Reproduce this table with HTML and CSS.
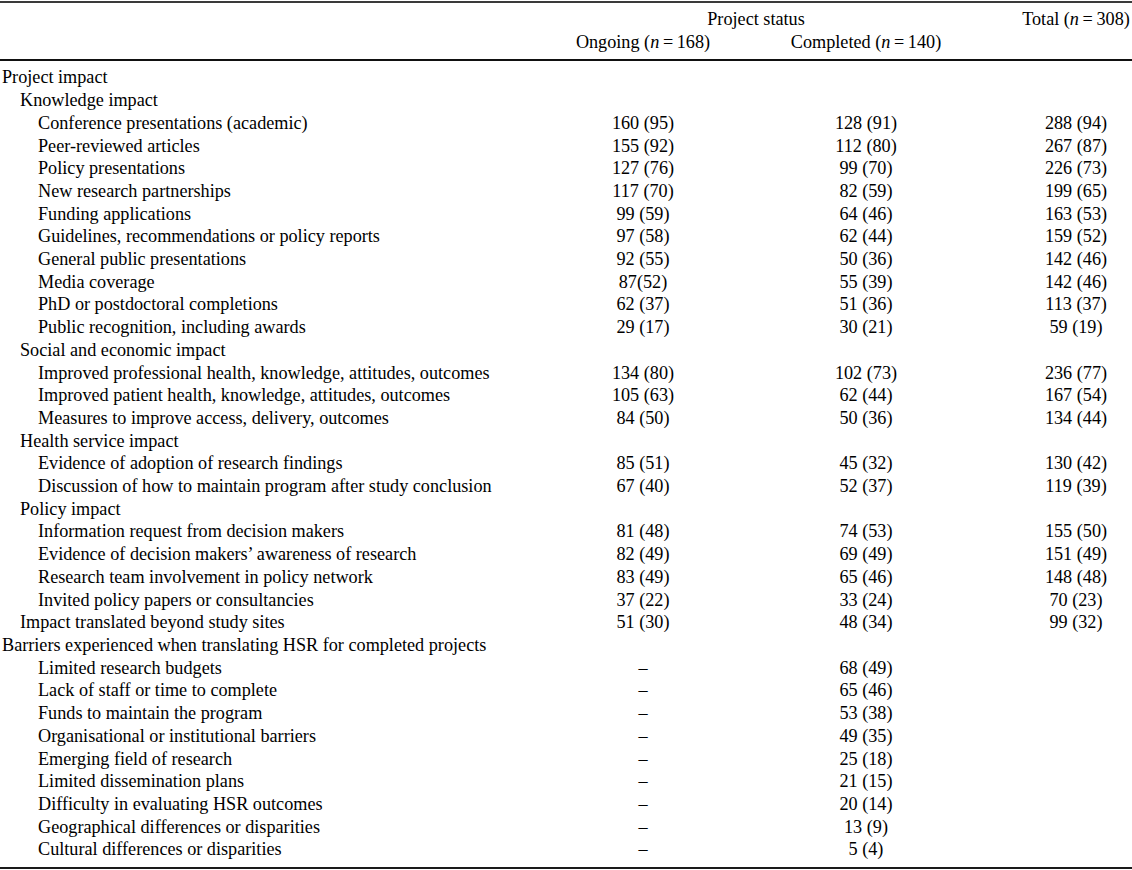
FILE: index.html
```html
<!DOCTYPE html>
<html>
<head>
<meta charset="utf-8">
<link rel="stylesheet" href="styles.css">
</head>
<body>
<table class="tbl">
  <colgroup>
    <col class="c-label">
    <col class="c-ong">
    <col class="c-comp">
    <col class="c-tot">
  </colgroup>
  <thead>
    <tr class="h1">
      <th></th>
      <th colspan="2" class="span">Project status</th>
      <th class="tot">Total (<i>n</i>&#8201;=&#8201;308)</th>
    </tr>
    <tr class="h2">
      <th></th>
      <th>Ongoing (<i>n</i>&#8201;=&#8201;168)</th>
      <th>Completed (<i>n</i>&#8201;=&#8201;140)</th>
      <th></th>
    </tr>
  </thead>
  <tbody>
    <tr class="first"><td class="l0">Project impact</td><td></td><td></td><td></td></tr>
    <tr><td class="l1">Knowledge impact</td><td></td><td></td><td></td></tr>
    <tr><td class="l2">Conference presentations (academic)</td><td>160 (95)</td><td>128 (91)</td><td class="tot">288 (94)</td></tr>
    <tr><td class="l2">Peer-reviewed articles</td><td>155 (92)</td><td>112 (80)</td><td class="tot">267 (87)</td></tr>
    <tr><td class="l2">Policy presentations</td><td>127 (76)</td><td>99 (70)</td><td class="tot">226 (73)</td></tr>
    <tr><td class="l2">New research partnerships</td><td>117 (70)</td><td>82 (59)</td><td class="tot">199 (65)</td></tr>
    <tr><td class="l2">Funding applications</td><td>99 (59)</td><td>64 (46)</td><td class="tot">163 (53)</td></tr>
    <tr><td class="l2">Guidelines, recommendations or policy reports</td><td>97 (58)</td><td>62 (44)</td><td class="tot">159 (52)</td></tr>
    <tr><td class="l2">General public presentations</td><td>92 (55)</td><td>50 (36)</td><td class="tot">142 (46)</td></tr>
    <tr><td class="l2">Media coverage</td><td>87(52)</td><td>55 (39)</td><td class="tot">142 (46)</td></tr>
    <tr><td class="l2">PhD or postdoctoral completions</td><td>62 (37)</td><td>51 (36)</td><td class="tot">113 (37)</td></tr>
    <tr><td class="l2">Public recognition, including awards</td><td>29 (17)</td><td>30 (21)</td><td class="tot">59 (19)</td></tr>
    <tr><td class="l1">Social and economic impact</td><td></td><td></td><td></td></tr>
    <tr><td class="l2">Improved professional health, knowledge, attitudes, outcomes</td><td>134 (80)</td><td>102 (73)</td><td class="tot">236 (77)</td></tr>
    <tr><td class="l2">Improved patient health, knowledge, attitudes, outcomes</td><td>105 (63)</td><td>62 (44)</td><td class="tot">167 (54)</td></tr>
    <tr><td class="l2">Measures to improve access, delivery, outcomes</td><td>84 (50)</td><td>50 (36)</td><td class="tot">134 (44)</td></tr>
    <tr><td class="l1">Health service impact</td><td></td><td></td><td></td></tr>
    <tr><td class="l2">Evidence of adoption of research findings</td><td>85 (51)</td><td>45 (32)</td><td class="tot">130 (42)</td></tr>
    <tr><td class="l2">Discussion of how to maintain program after study conclusion</td><td>67 (40)</td><td>52 (37)</td><td class="tot">119 (39)</td></tr>
    <tr><td class="l1">Policy impact</td><td></td><td></td><td></td></tr>
    <tr><td class="l2">Information request from decision makers</td><td>81 (48)</td><td>74 (53)</td><td class="tot">155 (50)</td></tr>
    <tr><td class="l2">Evidence of decision makers’ awareness of research</td><td>82 (49)</td><td>69 (49)</td><td class="tot">151 (49)</td></tr>
    <tr><td class="l2">Research team involvement in policy network</td><td>83 (49)</td><td>65 (46)</td><td class="tot">148 (48)</td></tr>
    <tr><td class="l2">Invited policy papers or consultancies</td><td>37 (22)</td><td>33 (24)</td><td class="tot">70 (23)</td></tr>
    <tr><td class="l1">Impact translated beyond study sites</td><td>51 (30)</td><td>48 (34)</td><td class="tot">99 (32)</td></tr>
    <tr><td class="l0">Barriers experienced when translating HSR for completed projects</td><td></td><td></td><td></td></tr>
    <tr><td class="l2">Limited research budgets</td><td>–</td><td>68 (49)</td><td></td></tr>
    <tr><td class="l2">Lack of staff or time to complete</td><td>–</td><td>65 (46)</td><td></td></tr>
    <tr><td class="l2">Funds to maintain the program</td><td>–</td><td>53 (38)</td><td></td></tr>
    <tr><td class="l2">Organisational or institutional barriers</td><td>–</td><td>49 (35)</td><td></td></tr>
    <tr><td class="l2">Emerging field of research</td><td>–</td><td>25 (18)</td><td></td></tr>
    <tr><td class="l2">Limited dissemination plans</td><td>–</td><td>21 (15)</td><td></td></tr>
    <tr><td class="l2">Difficulty in evaluating HSR outcomes</td><td>–</td><td>20 (14)</td><td></td></tr>
    <tr><td class="l2">Geographical differences or disparities</td><td>–</td><td>13 (9)</td><td></td></tr>
    <tr class="last"><td class="l2">Cultural differences or disparities</td><td>–</td><td>5 (4)</td><td></td></tr>
  </tbody>
</table>
</body>
</html>
```

FILE: styles.css
```css
html, body {
  margin: 0;
  padding: 0;
  background: #fff;
}
body {
  font-family: "Liberation Serif", "Times New Roman", serif;
  font-size: 18.2px;
  color: #000;
}
.tbl {
  margin-top: 1px;
  width: 1132px;
  border-collapse: collapse;
  table-layout: fixed;
  border-top: 2px solid #3a3a3a;
  border-bottom: 2px solid #1a1a1a;
}
.c-label { width: 555px; }
.c-ong { width: 176px; }
.c-comp { width: 270px; }
.c-tot { width: 131px; }
th, td {
  padding: 0;
  height: 22.7px;
  line-height: 22.7px;
  font-weight: normal;
  text-align: center;
  white-space: nowrap;
}
th.span { padding-right: 44px; }
.tot { padding-left: 19px; }
.h1 th { padding-top: 5px; }
.h2 th { padding-bottom: 6px; border-bottom: 2px solid #111; }
.first td { padding-top: 5px; }
td.l0, td.l1, td.l2 { text-align: left; }
td.l0 { padding-left: 2px; }
td.l1 { padding-left: 20px; }
td.l2 { padding-left: 38px; }
.last td { padding-bottom: 6px; }
```
